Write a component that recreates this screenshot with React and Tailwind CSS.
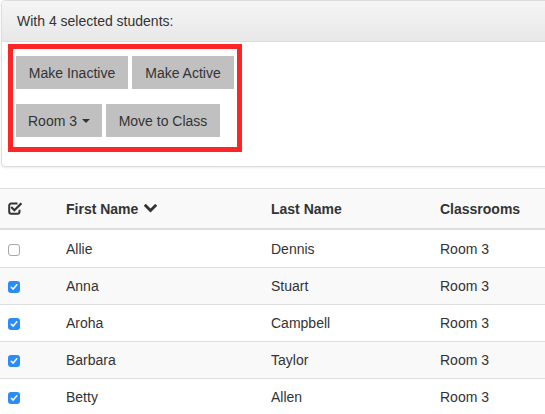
import React from "react";

const rows = [
  { first: "Allie", last: "Dennis", room: "Room 3", checked: false },
  { first: "Anna", last: "Stuart", room: "Room 3", checked: true },
  { first: "Aroha", last: "Campbell", room: "Room 3", checked: true },
  { first: "Barbara", last: "Taylor", room: "Room 3", checked: true },
  { first: "Betty", last: "Allen", room: "Room 3", checked: true },
];

function Btn({ children, className = "" }) {
  return (
    <div
      className={
        "h-[33px] flex items-center justify-center bg-[#c0c0c0] text-[#333] text-[14px] leading-[20px] " +
        className
      }
    >
      {children}
    </div>
  );
}

function Checkbox({ checked }) {
  if (checked) {
    return (
      <div className="w-[12px] h-[12px] rounded-[3px] bg-[#2a8cf8] flex items-center justify-center mt-px">
        <svg width="8" height="8" viewBox="0 0 8 8">
          <path d="M1.3 4.3 L3.2 6.1 L6.8 1.8" fill="none" stroke="#fff" strokeWidth="1.5" strokeLinecap="round" strokeLinejoin="round" />
        </svg>
      </div>
    );
  }
  return <div className="w-[12px] h-[12px] rounded-[3px] border border-[#a8a8a8] bg-white mt-px" />;
}

function CheckSquareIcon() {
  return (
    <svg width="14" height="13" viewBox="0 0 14 13">
      <path
        d="M9.5 1.5 H3.2 a2 2 0 0 0 -2 2 v6.3 a2 2 0 0 0 2 2 h6.3 a2 2 0 0 0 2 -2 V7.8"
        fill="none"
        stroke="#333"
        strokeWidth="2"
      />
      <path d="M4 5.8 L6.4 8.2 L12.6 2" fill="none" stroke="#333" strokeWidth="2.2" strokeLinecap="square" />
    </svg>
  );
}

function ChevronDown() {
  return (
    <svg width="13" height="9" viewBox="0 0 13 9" className="ml-[6px]">
      <path d="M1.8 1.8 L6.5 6.5 L11.2 1.8" fill="none" stroke="#333" strokeWidth="2.8" strokeLinecap="square" />
    </svg>
  );
}

export default function App() {
  return (
    <div
      className="w-[545px] h-[414px] overflow-hidden bg-white text-[#333] text-[14px] leading-[20px]"
      style={{ fontFamily: '"Liberation Sans", Arial, Helvetica, sans-serif' }}
    >
      {/* Panel */}
      <div className="ml-px mr-[-10px] border border-[#dddddd] rounded-[4px] bg-white shadow-[0_1px_2px_rgba(0,0,0,0.08)]">
        <div className="px-[15px] py-[10px] border-b border-[#dddddd] bg-gradient-to-b from-[#f5f5f5] to-[#e8e8e8] rounded-t-[3px]">
          With 4 selected students:
        </div>
        <div className="pl-[6px] pt-[2px] pb-[14px]">
          <div className="inline-block border-[5px] border-[#fd2525] px-[3px] pt-[7px] pb-[10px]">
            <div className="flex gap-[4px]">
              <Btn className="w-[112px]">Make Inactive</Btn>
              <Btn className="w-[102px]">Make Active</Btn>
            </div>
            <div className="flex gap-[4px] mt-[15px]">
              <Btn className="w-[86px]">
                Room 3
                <span className="ml-[5px] w-0 h-0 border-l-[4px] border-r-[4px] border-t-[4px] border-l-transparent border-r-transparent border-t-[#333]" />
              </Btn>
              <Btn className="w-[114px]">Move to Class</Btn>
            </div>
          </div>
        </div>
      </div>

      {/* Table */}
      <div className="mt-[21px] w-[600px] border-t border-[#dddddd]">
        <div className="flex h-[41px] items-center bg-[#f9f9f9] border-b-2 border-[#dddddd] font-bold">
          <div className="w-[58px] pl-[8px] flex items-center">
            <CheckSquareIcon />
          </div>
          <div className="w-[205px] pl-[8px] flex items-center">
            First Name
            <ChevronDown />
          </div>
          <div className="w-[169px] pl-[8px]">Last Name</div>
          <div className="flex-1 pl-[8px]">Classrooms</div>
        </div>
        {rows.map((r, i) => (
          <div
            key={r.first}
            className={
              "flex h-[37px] items-center border-[#dddddd] " +
              (i > 0 ? "border-t " : "pt-px ") +
              (i % 2 === 1 ? "bg-[#f9f9f9]" : "bg-white")
            }
          >
            <div className="w-[58px] pl-[8px] flex items-center">
              <Checkbox checked={r.checked} />
            </div>
            <div className="w-[205px] pl-[8px]">{r.first}</div>
            <div className="w-[169px] pl-[8px]">{r.last}</div>
            <div className="flex-1 pl-[8px]">{r.room}</div>
          </div>
        ))}
      </div>
    </div>
  );
}
